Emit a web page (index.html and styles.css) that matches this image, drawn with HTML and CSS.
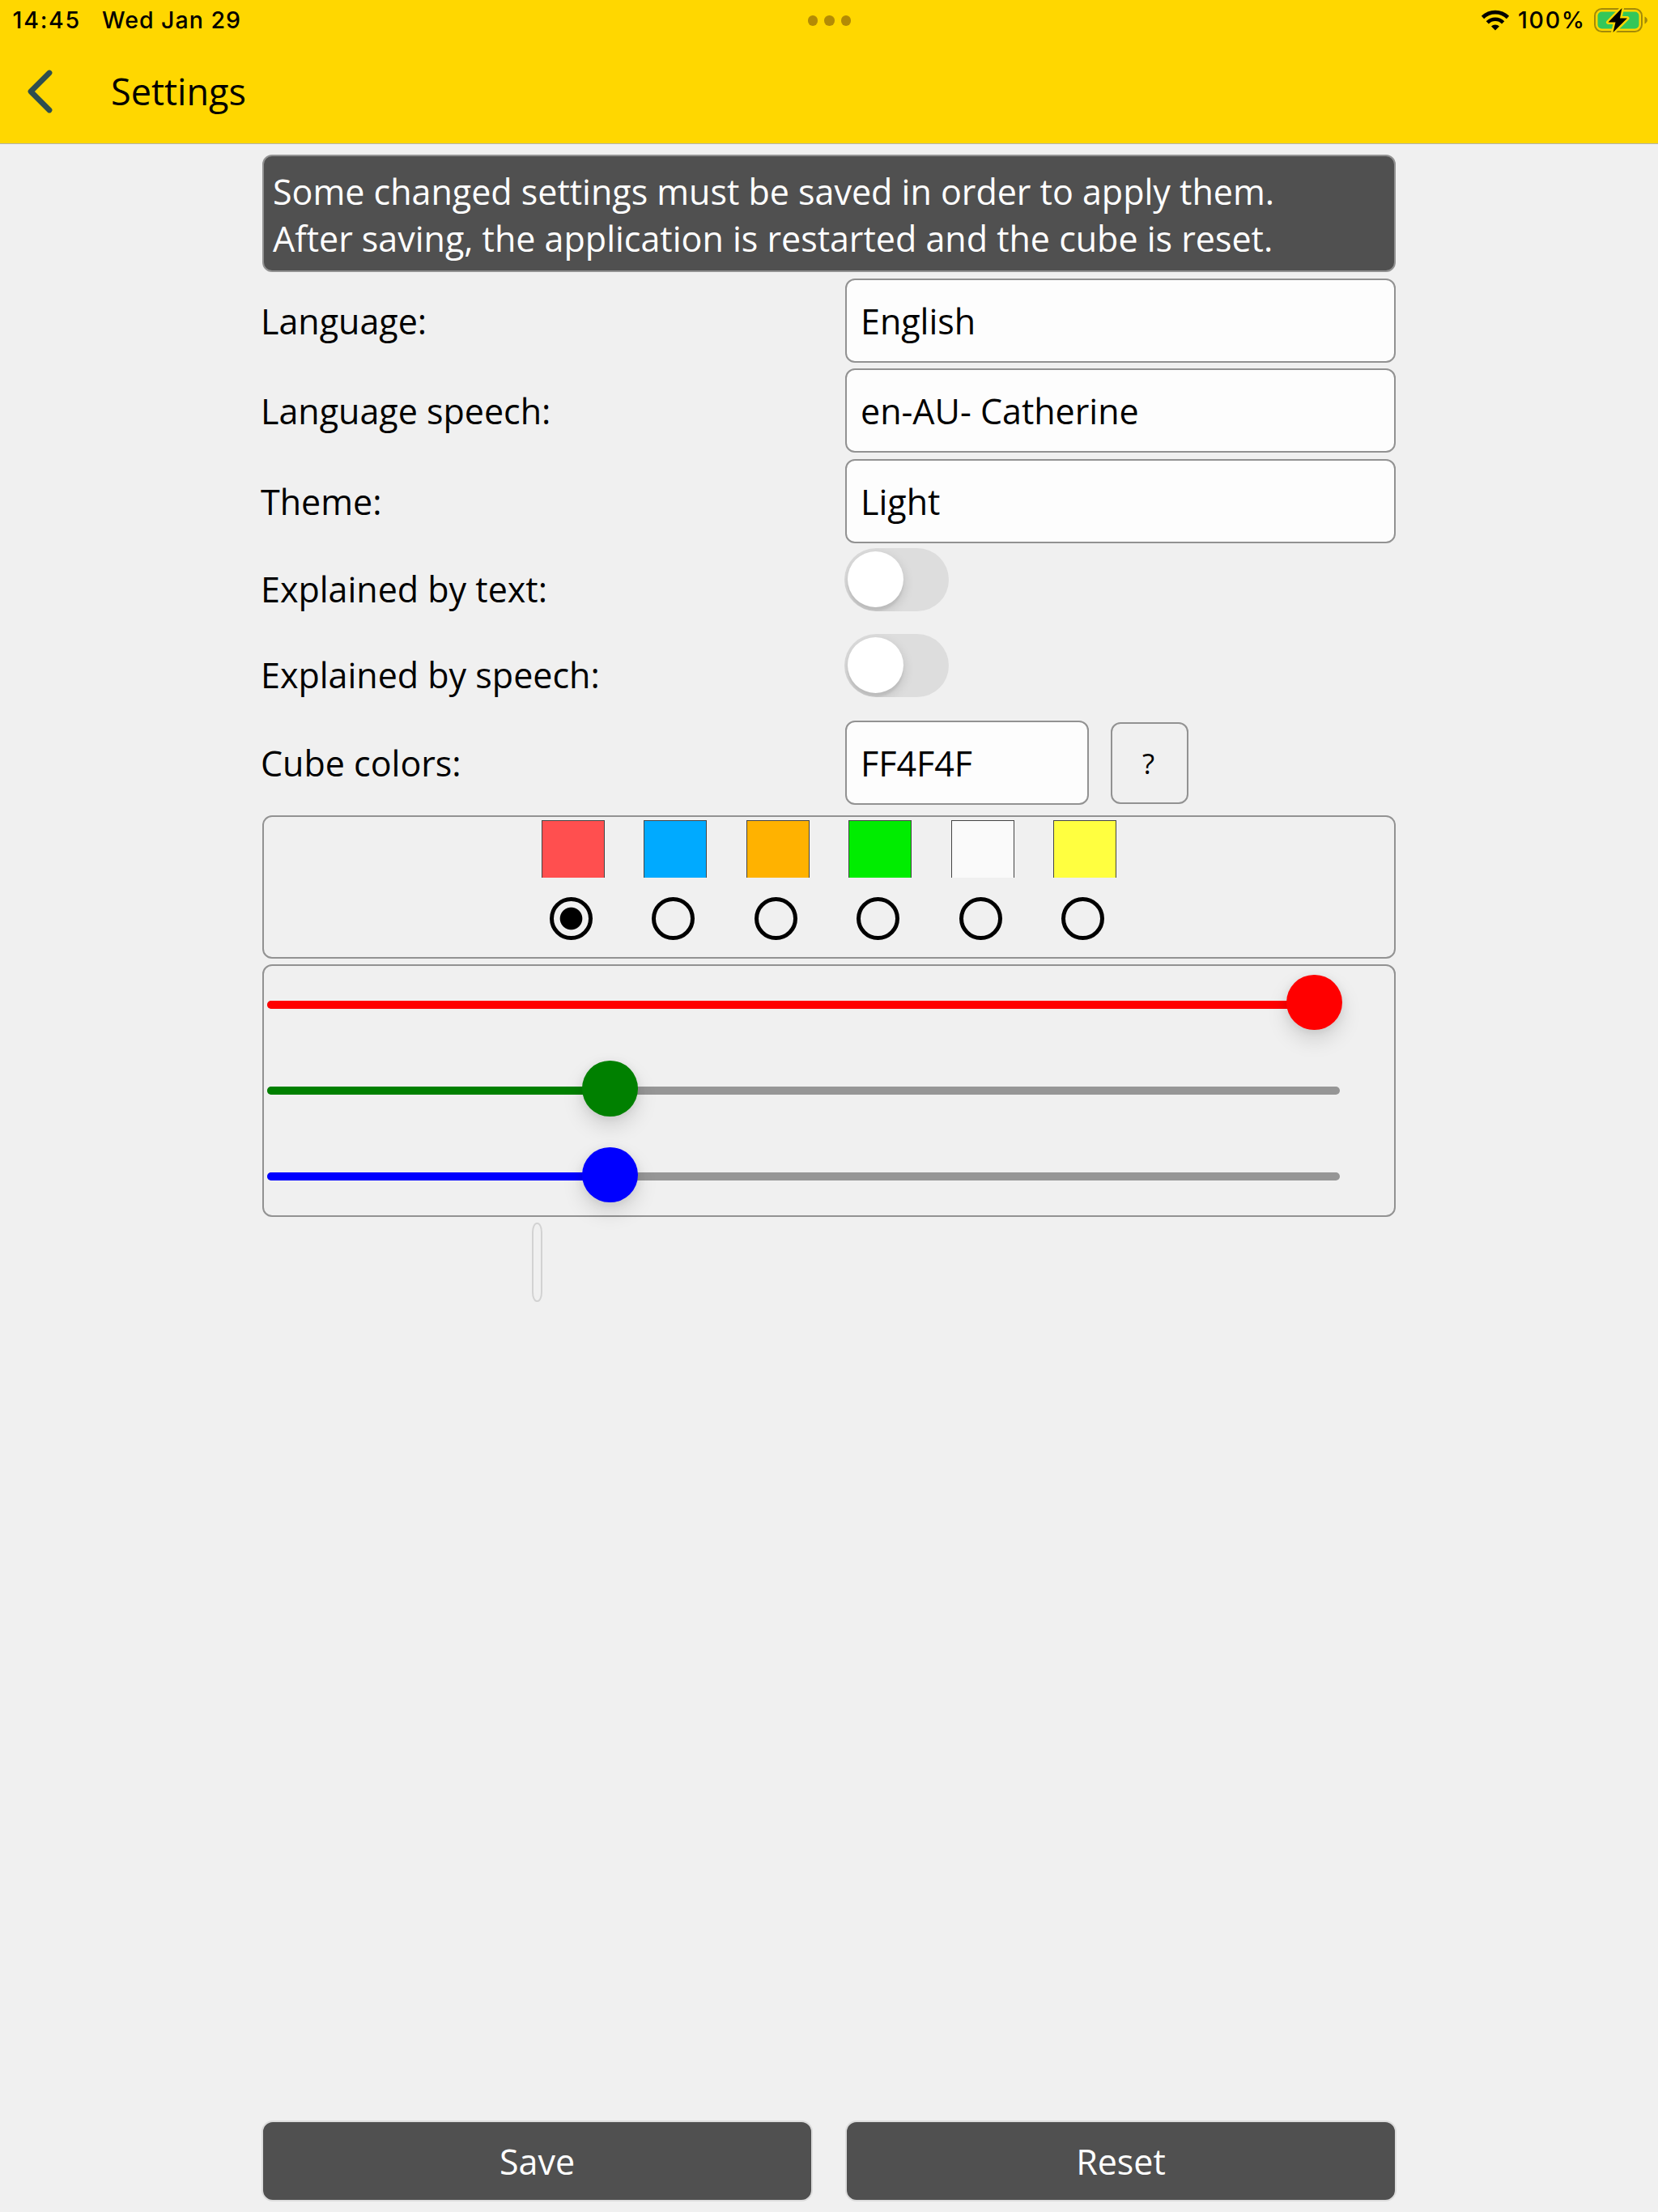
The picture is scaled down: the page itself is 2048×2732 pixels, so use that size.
FILE: index.html
```html
<!DOCTYPE html>
<html lang="en">
<head>
<meta charset="utf-8">
<title>Settings</title>
<link rel="stylesheet" href="styles.css">
</head>
<body>
<header class="top">
  <div class="status">
    <span class="time">14:45</span>
    <span class="date">Wed Jan 29</span>
    <span class="dots"><i></i><i></i><i></i></span>
    <svg class="wifi" width="36" height="26" viewBox="0 0 36 26">
      <path d="M2.500 9.500A22 22 0 0 1 33.500 9.500" fill="none" stroke="#000" stroke-width="4.600"/>
      <path d="M8.300 15.800A13.700 13.700 0 0 1 27.700 15.800" fill="none" stroke="#000" stroke-width="4.600"/>
      <path d="M18 25.500l-5-5a7 7 0 0 1 10 0z"/>
    </svg>
    <span class="percent">100%</span>
    <svg class="battery" width="68" height="34" viewBox="0 0 68 34">
      <rect x="2" y="3" width="58" height="28" rx="8.500" fill="none" stroke="#a38a08" stroke-width="2"/>
      <rect x="5.500" y="6.500" width="51" height="21" rx="5" fill="#34c759"/>
      <path d="M63.500 12.500q3.500 1.500 3.500 4.500t-3.500 4.500z" fill="#a38a08"/>
      <path d="M35.500 2L18.500 19.500h9l-3 12.500 17.500-17.500h-9z" fill="#000" stroke="#ffd700" stroke-width="5" paint-order="stroke" stroke-linejoin="round"/>
    </svg>
  </div>
  <div class="bar">
    <svg class="back" width="36" height="60" viewBox="0 0 36 60">
      <path d="M29 7L6 30l23 23" fill="none" stroke="#2f4f4f" stroke-width="6.800" stroke-linecap="round" stroke-linejoin="round"/>
    </svg>
    <h1 class="title">Settings</h1>
  </div>
</header>
<main class="page">
  <p class="notice">Some changed settings must be saved in order to apply them.<br>After saving, the application is restarted and the cube is reset.</p>
  <div class="row"><span class="label">Language:</span><div class="field">English</div></div>
  <div class="row"><span class="label">Language speech:</span><div class="field">en-AU- Catherine</div></div>
  <div class="row theme-row"><span class="label">Theme:</span><div class="field">Light</div></div>
  <div class="row toggle-row"><span class="label">Explained by text:</span><div class="switch"><i class="knob"></i></div></div>
  <div class="row toggle-row"><span class="label">Explained by speech:</span><div class="switch"><i class="knob"></i></div></div>
  <div class="row color-row"><span class="label">Cube colors:</span><div class="field hex">FF4F4F</div><button class="help">?</button></div>
  <section class="panel colors">
    <div class="choice"><i class="swatch red"></i><i class="radio checked"></i></div>
    <div class="choice"><i class="swatch blue"></i><i class="radio"></i></div>
    <div class="choice"><i class="swatch orange"></i><i class="radio"></i></div>
    <div class="choice"><i class="swatch green"></i><i class="radio"></i></div>
    <div class="choice"><i class="swatch white"></i><i class="radio"></i></div>
    <div class="choice"><i class="swatch yellow"></i><i class="radio"></i></div>
  </section>
  <section class="panel sliders">
    <div class="slider s-red"><i class="fill" style="width:1293.400px"></i><i class="thumb"></i></div>
    <div class="slider s-green"><i class="fill" style="width:423.400px"></i><i class="thumb"></i></div>
    <div class="slider s-blue"><i class="fill" style="width:423.400px"></i><i class="thumb"></i></div>
  </section>
  <div class="empty-button"></div>
  <footer class="actions"><button class="action">Save</button><button class="action">Reset</button></footer>
</main>
</body>
</html>
```
FILE: styles.css
```css
* { box-sizing: border-box; }
body {
  margin: 0;
  height: 2732px;
  display: flex;
  flex-direction: column;
  background: #f0f0f0;
  color: #000;
  font: 43px/60px "Open Sans", "Noto Sans", sans-serif;
}
i { display: block; font-style: normal; }
button { font: inherit; color: inherit; margin: 0; padding: 0; }

.top { height: 178px; background: #ffd700; border-bottom: 1px solid #b2b2b2; flex: none; }
.status {
  position: relative;
  display: flex;
  align-items: center;
  height: 50px;
  padding-left: 15.500px;
  font: 500 28.500px/50px Inter, sans-serif;
  letter-spacing: 1px;
}
.time { width: 110.500px; letter-spacing: 1.800px; }
.dots { position: absolute; left: 997.500px; top: 19px; display: flex; gap: 8px; }
.dots i { width: 12.500px; height: 12.500px; border-radius: 50%; background: #b38b05; }
.wifi { margin-left: auto; }
.percent { width: 84px; margin-left: 10px; letter-spacing: 1.700px; }
.battery { margin-left: 9px; margin-right: 12px; }
.bar { display: flex; align-items: center; height: 125px; padding-left: 32px; }
.title { margin: 0 0 0 69px; font-size: 45px; font-weight: 400; }

.page { flex: 1; width: 1402px; margin-left: 323px; padding-top: 13px; display: flex; flex-direction: column; }
.notice {
  margin: 0 1px 8px;
  height: 145px;
  padding: 15px 11px;
  border: 2px solid #929292;
  border-radius: 12px;
  background: #505050;
  color: #fff;
  line-height: 58px;
}
.row { display: flex; align-items: center; height: 104px; margin-bottom: 7px; flex: none; }
.label { width: 722px; margin-left: -1px; padding-top: 2px; flex: none; }
.field {
  width: 680px;
  height: 104px;
  padding: 0 17px;
  border: 2px solid #929292;
  border-radius: 12px;
  background: #fdfdfd;
  line-height: 102px;
}
.theme-row { margin: 1px 0 6px; }
.toggle-row { height: 100px; margin-bottom: 6px; }
.switch { align-self: flex-start; width: 129px; height: 78px; margin-left: -1px; padding: 4px; border-radius: 39px; background: #ddd; overflow: hidden; }
.knob { width: 69px; height: 69px; border-radius: 50%; background: #fff; box-shadow: 0 5px 14px rgba(0, 0, 0, .15), 0 5px 2px rgba(0, 0, 0, .05); }
.color-row { margin: 1px 0 13px; }
.hex { width: 301px; }
.help { width: 96px; height: 101px; margin-left: 27px; padding: 1px 3px 0 0; border: 2px solid #929292; border-radius: 12px; background: #f0f0f0; font-size: 35px; }

.panel { margin: 0 1px 7px; border: 2px solid #929292; border-radius: 12px; flex: none; }
.colors { height: 177px; padding: 4px 0 0 343px; display: flex; gap: 48.400px; }
.choice { width: 78px; }
.swatch { height: 71px; border: 1px solid #444; border-bottom: 0; }
.red { background: #ff4f4f; }
.blue { background: #0af; }
.orange { background: #ffb200; }
.green { background: #00ed00; }
.white { background: #fafafa; }
.yellow { background: #ffff40; }
.radio { width: 53px; height: 53px; margin: 23.500px 0 0 10px; border: 5px solid #000; border-radius: 50%; }
.checked { background: radial-gradient(circle, #000 13.300px, transparent 14.300px); }

.sliders { height: 312px; padding: 42.500px 0 0 4px; }
.slider { position: relative; width: 1325px; height: 10px; margin-bottom: 96.400px; border-radius: 5px; background: #969696; display: flex; align-items: center; }
.fill { flex: none; height: 100%; border-radius: 5px 0 0 5px; background: currentColor; }
.thumb { flex: none; width: 68.500px; height: 68.500px; margin: -5px 0 0 -34.200px; border-radius: 50%; background: currentColor; box-shadow: 0 12px 26px rgba(0, 0, 0, .13), 0 2px 12px rgba(0, 0, 0, .08); }
.s-red { color: #f00; }
.s-green { color: green; }
.s-blue { color: #00f; }

.empty-button { width: 13px; height: 98px; margin-left: 334px; border: 2px solid #d2d2d2; border-radius: 6px / 12px; flex: none; }
.actions { display: flex; justify-content: space-between; margin-top: auto; padding-bottom: 13px; }
.action { width: 681px; height: 100px; padding-top: 1px; border: 2px solid #dcdcdc; border-radius: 14px; background: #505050; color: #fff; }
```
